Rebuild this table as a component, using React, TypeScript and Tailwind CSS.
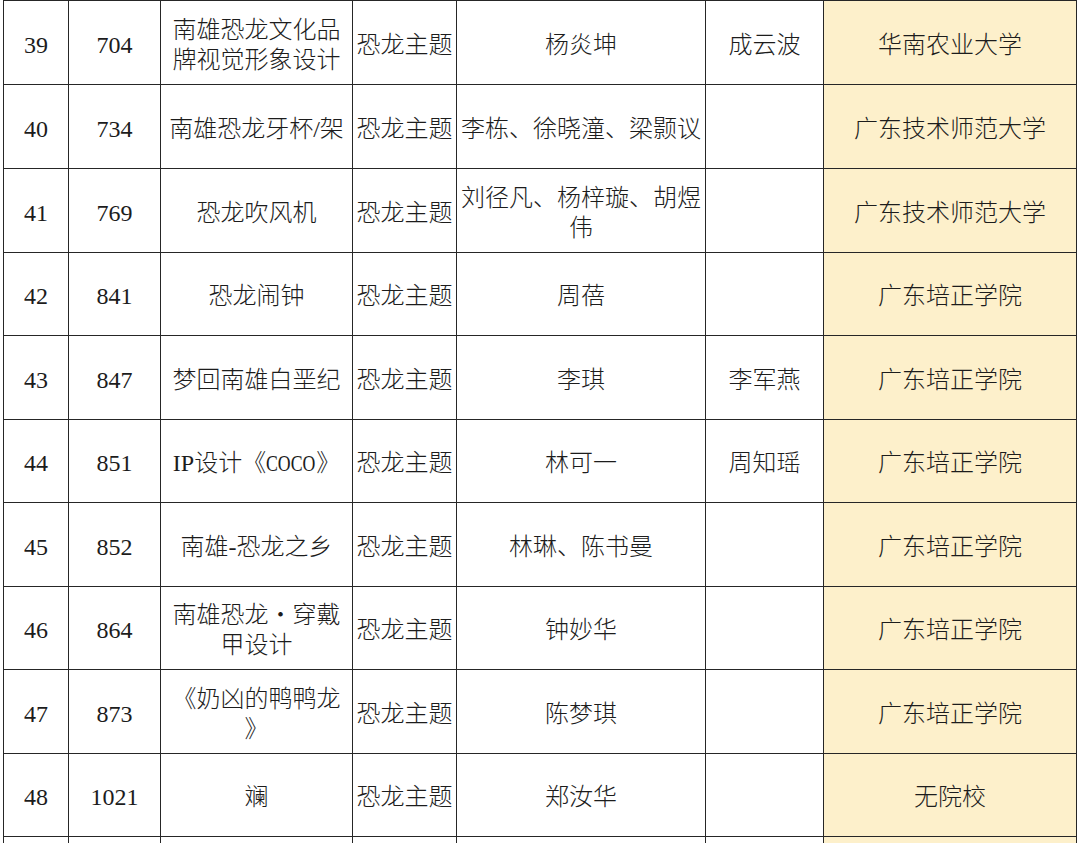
import React from "react";

type Row = {
  no: string;
  id: string;
  title: React.ReactNode;
  theme: string;
  author: React.ReactNode;
  teacher: string;
  school: string;
  h: string;
};

const Coco = () => (
  <span className="inline-block w-[50px] overflow-visible align-baseline">
    <span className="inline-block origin-left scale-x-[0.74]">COCO</span>
  </span>
);

const rows: Row[] = [
  { no: "39", id: "704", title: <>南雄恐龙文化品<br />牌视觉形象设计</>, theme: "恐龙主题", author: "杨炎坤", teacher: "成云波", school: "华南农业大学", h: "h-[84px]" },
  { no: "40", id: "734", title: "南雄恐龙牙杯/架", theme: "恐龙主题", author: "李栋、徐晓潼、梁颢议", teacher: "", school: "广东技术师范大学", h: "h-[84px]" },
  { no: "41", id: "769", title: "恐龙吹风机", theme: "恐龙主题", author: <>刘径凡、杨梓璇、胡煜<br />伟</>, teacher: "", school: "广东技术师范大学", h: "h-[84px]" },
  { no: "42", id: "841", title: "恐龙闹钟", theme: "恐龙主题", author: "周蓓", teacher: "", school: "广东培正学院", h: "h-[83px]" },
  { no: "43", id: "847", title: "梦回南雄白垩纪", theme: "恐龙主题", author: "李琪", teacher: "李军燕", school: "广东培正学院", h: "h-[84px]" },
  { no: "44", id: "851", title: <>IP设计《<Coco />》</>, theme: "恐龙主题", author: "林可一", teacher: "周知瑶", school: "广东培正学院", h: "h-[83px]" },
  { no: "45", id: "852", title: "南雄-恐龙之乡", theme: "恐龙主题", author: "林琳、陈书曼", teacher: "", school: "广东培正学院", h: "h-[84px]" },
  { no: "46", id: "864", title: <>南雄恐龙・穿戴<br />甲设计</>, theme: "恐龙主题", author: "钟妙华", teacher: "", school: "广东培正学院", h: "h-[83px]" },
  { no: "47", id: "873", title: <>《奶凶的鸭鸭龙<br />》</>, theme: "恐龙主题", author: "陈梦琪", teacher: "", school: "广东培正学院", h: "h-[84px]" },
  { no: "48", id: "1021", title: "斓", theme: "恐龙主题", author: "郑汝华", teacher: "", school: "无院校", h: "h-[83px]" },
];

const td = "border border-[#262626] text-center align-middle px-0 pt-[4px] pb-0 whitespace-nowrap";

export default function App() {
  return (
    <div className="w-[1080px] h-[843px] overflow-hidden bg-white">
      <table
        className="ml-[3px] border-collapse table-fixed w-[1073px] text-[24px] leading-[30px] font-light text-[#1c1c1c]"
        style={{ fontFamily: "'Liberation Serif','Noto Sans CJK SC',serif" }}
      >
        <colgroup>
          <col className="w-[65px]" />
          <col className="w-[92px]" />
          <col className="w-[192px]" />
          <col className="w-[104px]" />
          <col className="w-[249px]" />
          <col className="w-[118px]" />
          <col className="w-[253px]" />
        </colgroup>
        <tbody>
          {rows.map((r) => (
            <tr key={r.no} className={r.h}>
              <td className={td}>{r.no}</td>
              <td className={td}>{r.id}</td>
              <td className={td}>{r.title}</td>
              <td className={td}>{r.theme}</td>
              <td className={td}>{r.author}</td>
              <td className={td}>{r.teacher}</td>
              <td className={`${td} bg-[#fdf0cb]`}>{r.school}</td>
            </tr>
          ))}
          <tr className="h-[84px]">
            <td className={td}></td>
            <td className={td}></td>
            <td className={td}></td>
            <td className={td}></td>
            <td className={td}></td>
            <td className={td}></td>
            <td className={`${td} bg-[#fdf0cb]`}></td>
          </tr>
        </tbody>
      </table>
    </div>
  );
}
